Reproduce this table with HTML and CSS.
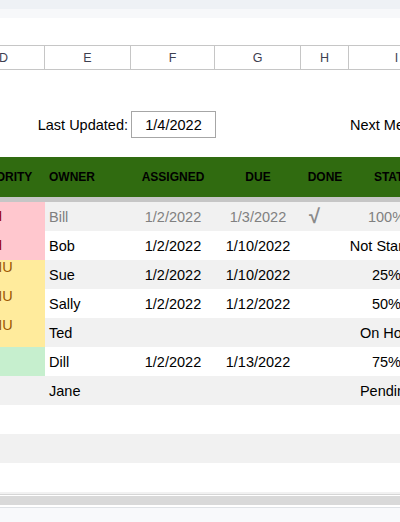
FILE: index.html
```html
<!DOCTYPE html>
<html>
<head>
<meta charset="utf-8">
<link rel="stylesheet" href="styles.css">
</head>
<body>
<div class="topbar"></div>
<div class="subbar"></div>
<div class="viewport">
  <div class="sheet">
    <div class="colhead">
      <div class="cl">D</div><div class="cl">E</div><div class="cl">F</div><div class="cl">G</div><div class="cl">H</div><div class="cl">I</div><div class="cl">J</div>
    </div>
    <div class="info">
      <div class="label">Last Updated:</div>
      <div class="datebox">1/4/2022</div>
      <div class="empty"></div>
      <div class="empty"></div>
      <div class="next">Next Meeting:</div>
    </div>
    <div class="thead">
      <div class="th c">PRIORITY</div>
      <div class="th l">OWNER</div>
      <div class="th c">ASSIGNED</div>
      <div class="th c">DUE</div>
      <div class="th c">DONE</div>
      <div class="th c">STATUS</div>
      <div class="th"></div>
    </div>
    <div class="row alt done">
      <div class="pri high"><span>HIGH</span></div>
      <div class="name">Bill</div>
      <div class="date">1/2/2022</div>
      <div class="date">1/3/2022</div>
      <div class="check">√</div>
      <div class="status">100%</div>
      <div></div>
    </div>
    <div class="row">
      <div class="pri high"><span>HIGH</span></div>
      <div class="name">Bob</div>
      <div class="date">1/2/2022</div>
      <div class="date">1/10/2022</div>
      <div class="check"></div>
      <div class="status">Not Started</div>
      <div></div>
    </div>
    <div class="row alt">
      <div class="pri med"><span>MEDIUM</span></div>
      <div class="name">Sue</div>
      <div class="date">1/2/2022</div>
      <div class="date">1/10/2022</div>
      <div class="check"></div>
      <div class="status">25%</div>
      <div></div>
    </div>
    <div class="row">
      <div class="pri med"><span>MEDIUM</span></div>
      <div class="name">Sally</div>
      <div class="date">1/2/2022</div>
      <div class="date">1/12/2022</div>
      <div class="check"></div>
      <div class="status">50%</div>
      <div></div>
    </div>
    <div class="row alt">
      <div class="pri med"><span>MEDIUM</span></div>
      <div class="name">Ted</div>
      <div class="date"></div>
      <div class="date"></div>
      <div class="check"></div>
      <div class="status">On Hold</div>
      <div></div>
    </div>
    <div class="row">
      <div class="pri low"><span>LOW</span></div>
      <div class="name">Dill</div>
      <div class="date">1/2/2022</div>
      <div class="date">1/13/2022</div>
      <div class="check"></div>
      <div class="status">75%</div>
      <div></div>
    </div>
    <div class="row alt">
      <div class="pri"></div>
      <div class="name">Jane</div>
      <div class="date"></div>
      <div class="date"></div>
      <div class="check"></div>
      <div class="status">Pending</div>
      <div></div>
    </div>
    <div class="row"></div>
    <div class="row alt"></div>
    <div class="row"></div>
    <div class="row alt"></div>
  </div>
</div>
<div class="scrollzone">
  <div class="sline"></div>
  <div class="sgap"></div>
  <div class="sband"></div>
  <div class="sgap2"></div>
  <div class="footer"></div>
</div>
</body>
</html>
```
FILE: styles.css
```css
* { box-sizing: border-box; }
html, body { margin: 0; padding: 0; background: #ffffff; }
body {
  width: 400px;
  height: 522px;
  overflow: hidden;
  font-family: "Liberation Sans", Arial, sans-serif;
  font-size: 14.5px;
  color: #000;
}
.topbar { height: 9px; background: #eef1f5; }
.subbar { height: 9px; background: #f7f8fa; }
.viewport {
  height: 476px;
  overflow: hidden;
  position: relative;
}
.sheet {
  margin-left: -37px;
  width: 640px;
  padding-top: 27px;
}
.colhead, .info, .thead, .row {
  display: grid;
  grid-template-columns: 82px 86px 84px 86px 48px 96px 158px;
}
.colhead {
  height: 25px;
  border-top: 1px solid #c6c6c6;
  border-bottom: 1px solid #c6c6c6;
}
.cl {
  border-right: 1px solid #c6c6c6;
  display: flex;
  align-items: center;
  justify-content: center;
  font-size: 12.5px;
  color: #3d4050;
}
.info {
  margin-top: 41px;
  height: 27px;
}
.label {
  grid-column: 1 / 3;
  display: flex;
  align-items: center;
  justify-content: flex-end;
  padding-right: 3px;
}
.datebox {
  border: 1px solid #a6a6a6;
  display: flex;
  align-items: center;
  justify-content: center;
  margin-right: -1px;
}
.next {
  display: flex;
  align-items: center;
  padding-left: 1px;
  white-space: nowrap;
}
.thead {
  margin-top: 19px;
  height: 45px;
  background: #306b10;
  border-bottom: 5px solid #c6c6c6;
}
.th {
  display: flex;
  align-items: center;
  font-weight: bold;
  font-size: 12px;
  color: #000;
  white-space: nowrap;
}
.th.c { justify-content: center; }
.th.l { padding-left: 4px; }
.row {
  height: 29px;
  background: #ffffff;
}
.row.alt { background: #f1f1f1; }
.row > div {
  display: flex;
  align-items: center;
  white-space: nowrap;
}
.pri { padding-left: 3px; font-size: 14.5px; }
.pri span {
  display: block;
  width: 50px;
  white-space: normal;
  word-break: break-all;
  line-height: 15px;
}
.pri.high { background: #ffc7ce; color: #9c0006; }
.pri.med { background: #ffeb9c; color: #9c5700; }
.pri.low { background: #c6efce; color: #006100; }
.row > .name { padding-left: 4px; }
.row > .date { justify-content: center; }
.row > .check {
  padding-left: 8px;
  font-size: 20px;
  font-weight: bold;
  color: #8a8a8a;
}
.row > .status { justify-content: center; padding-right: 21px; }
.done .name, .done .date, .done .status { color: #808080; }
.scrollzone { height: 28px; }
.sline { height: 1px; background: #d6d6d6; }
.sgap { height: 1px; background: #ffffff; }
.sband { height: 9px; background: #d9d9d9; }
.sgap2 { height: 2px; background: #ffffff; }
.footer { height: 15px; background: #f8f9fb; border-top: 1px solid #dfe2e6; }
```
